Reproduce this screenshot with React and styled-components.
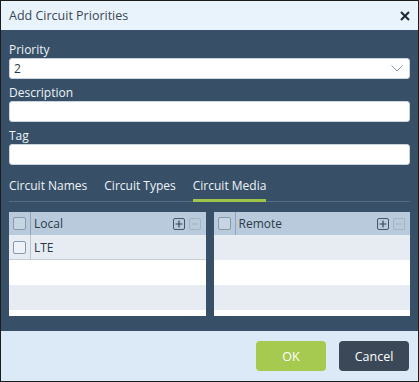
import React, { useState } from "react";
import styled, { createGlobalStyle } from "styled-components";

const GlobalStyle = createGlobalStyle`
  html, body {
    margin: 0;
    padding: 0;
    background: #ffffff;
  }
  body {
    font-family: "Open Sans", "Noto Sans", "Liberation Sans", sans-serif;
  }
  * {
    box-sizing: border-box;
  }
`;

const Dialog = styled.div`
  width: 419px;
  height: 382px;
  border: 1px solid #1c1c1c;
  display: flex;
  flex-direction: column;
  background: #375068;
  overflow: hidden;
`;

const TitleBar = styled.div`
  height: 29px;
  flex: none;
  display: flex;
  align-items: center;
  justify-content: space-between;
  padding: 0 8px 0 8px;
  background: #e9f3fc;
  color: #3a4653;
  font-size: 12.5px;
`;

const CloseButton = styled.button`
  border: none;
  background: none;
  padding: 0;
  width: 11px;
  height: 11px;
  display: flex;
  align-items: center;
  justify-content: center;
  cursor: pointer;
`;

const Body = styled.div`
  flex: 1;
  min-height: 0;
  display: flex;
  flex-direction: column;
  padding: 12px 8px 15px 8px;
`;

const Field = styled.div`
  display: flex;
  flex-direction: column;
  margin-bottom: ${(props) => props.gap ?? 6}px;
`;

const Label = styled.label`
  font-size: 12px;
  line-height: 16px;
  color: #eef3f7;
`;

const InputWrap = styled.div`
  position: relative;
  height: 21px;
`;

const TextInput = styled.input`
  display: block;
  width: 100%;
  height: 21px;
  border: 1px solid #c9d4de;
  border-radius: 3px;
  background: #ffffff;
  font-family: inherit;
  font-size: 12px;
  color: #2b3845;
  padding: 0 4px;
  outline: none;
`;

const Chevron = styled.svg`
  position: absolute;
  right: 7px;
  top: 7px;
  pointer-events: none;
`;

const Tabs = styled.div`
  display: flex;
  gap: 17px;
  margin-top: 13px;
  border-bottom: 1px solid #536d84;
`;

const Tab = styled.div`
  font-size: 12px;
  line-height: 16px;
  color: #eef3f7;
  padding-bottom: 5px;
  margin-bottom: -1px;
  border-bottom: 3px solid ${(props) => (props.active ? "#9fc54a" : "transparent")};
  cursor: pointer;
`;

const Grids = styled.div`
  display: grid;
  grid-template-columns: 1fr 1fr;
  grid-template-rows: minmax(0, 1fr);
  gap: 8px;
  margin-top: 10px;
  flex: 1;
  min-height: 0;
`;

const Grid = styled.div`
  background: #ffffff;
  display: flex;
  flex-direction: column;
  overflow: hidden;
  min-height: 0;
`;

const HeaderRow = styled.div`
  height: 23px;
  flex: none;
  display: flex;
  align-items: center;
  background: #b8cadb;
  color: #2c3a47;
  font-size: 12px;
`;

const Row = styled.div`
  height: 25px;
  flex: none;
  display: flex;
  align-items: center;
  background: ${(props) => (props.striped ? "#e7ecf2" : "#ffffff")};
  border-bottom: ${(props) => (props.filled ? "1px solid #c6ced6" : "none")};
  color: #2c3a47;
  font-size: 12px;
`;

const CheckCell = styled.div`
  width: 22px;
  height: 100%;
  flex: none;
  display: flex;
  align-items: center;
  padding-left: 4px;
  border-right: 1px solid ${(props) => (props.header ? "#90a5b7" : "#b9c4ce")};
`;

const Check = styled.span`
  width: 13px;
  height: 13px;
  border: 1px solid #8799aa;
  border-radius: 2px;
  background: ${(props) => (props.header ? "#c6d5e2" : "#eef2f6")};
`;

const CellText = styled.div`
  flex: 1;
  padding-left: 3px;
`;

const Actions = styled.div`
  display: flex;
  gap: 4px;
  padding-right: 5px;
`;

const IconBox = styled.button`
  width: 12px;
  height: 12px;
  padding: 0;
  border: 1px solid ${(props) => (props.disabled ? "#a3b5c5" : "#44566a")};
  border-radius: 2px;
  background: transparent;
  display: flex;
  align-items: center;
  justify-content: center;
`;

const Footer = styled.div`
  height: 50px;
  flex: none;
  display: flex;
  justify-content: flex-end;
  align-items: flex-start;
  gap: 13px;
  padding: 10px 9px 0 0;
  background: #dbeaf6;
`;

const Button = styled.button`
  width: 70px;
  height: 30px;
  border: none;
  border-radius: 4px;
  background: ${(props) => props.bg};
  color: #ffffff;
  font-family: inherit;
  font-size: 12.5px;
  cursor: pointer;
`;

const PlusIcon = () => (
  <svg width="8" height="8" viewBox="0 0 8 8">
    <path d="M4 0.5V7.5M0.5 4H7.5" stroke="#34465a" strokeWidth="1.2" />
  </svg>
);

const MinusIcon = () => (
  <svg width="8" height="8" viewBox="0 0 8 8">
    <path d="M1 4H7" stroke="#a3b5c5" strokeWidth="1.2" />
  </svg>
);

const DataGrid = ({ title, rows }) => {
  const fillers = Array.from({ length: 4 - rows.length });
  return (
    <Grid>
      <HeaderRow>
        <CheckCell header>
          <Check header />
        </CheckCell>
        <CellText>{title}</CellText>
        <Actions>
          <IconBox title="Add">
            <PlusIcon />
          </IconBox>
          <IconBox disabled title="Remove">
            <MinusIcon />
          </IconBox>
        </Actions>
      </HeaderRow>
      {rows.map((r, i) => (
        <Row key={r} filled striped={i % 2 === 0}>
          <CheckCell>
            <Check />
          </CheckCell>
          <CellText>{r}</CellText>
        </Row>
      ))}
      {fillers.map((_, i) => (
        <Row key={i} striped={(i + rows.length) % 2 === 0} />
      ))}
    </Grid>
  );
};

const App = () => {
  const [tab, setTab] = useState("media");
  const tabs = [
    { id: "names", label: "Circuit Names" },
    { id: "types", label: "Circuit Types" },
    { id: "media", label: "Circuit Media" },
  ];

  return (
    <>
      <GlobalStyle />
      <Dialog>
        <TitleBar>
          <span>Add Circuit Priorities</span>
          <CloseButton aria-label="Close">
            <svg width="10" height="10" viewBox="0 0 10 10">
              <path d="M1 1L9 9M9 1L1 9" stroke="#1f262d" strokeWidth="2" />
            </svg>
          </CloseButton>
        </TitleBar>
        <Body>
          <Field>
            <Label>Priority</Label>
            <InputWrap>
              <TextInput defaultValue="2" readOnly />
              <Chevron width="12" height="7" viewBox="0 0 12 7">
                <path d="M0.5 0.5L6 6L11.5 0.5" fill="none" stroke="#8d9dac" strokeWidth="1" />
              </Chevron>
            </InputWrap>
          </Field>
          <Field>
            <Label>Description</Label>
            <InputWrap>
              <TextInput />
            </InputWrap>
          </Field>
          <Field gap={0}>
            <Label>Tag</Label>
            <InputWrap>
              <TextInput />
            </InputWrap>
          </Field>
          <Tabs>
            {tabs.map((t) => (
              <Tab key={t.id} active={tab === t.id} onClick={() => setTab(t.id)}>
                {t.label}
              </Tab>
            ))}
          </Tabs>
          <Grids>
            <DataGrid title="Local" rows={["LTE"]} />
            <DataGrid title="Remote" rows={[]} />
          </Grids>
        </Body>
        <Footer>
          <Button bg="#a6c94f">OK</Button>
          <Button bg="#3b4858">Cancel</Button>
        </Footer>
      </Dialog>
    </>
  );
};

export default App;
